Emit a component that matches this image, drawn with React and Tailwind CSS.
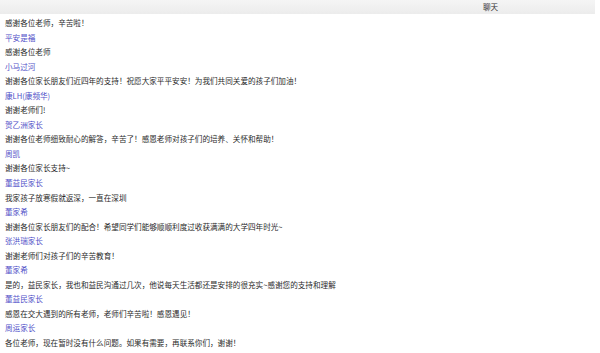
const messages = [
  { text: "感谢各位老师，辛苦啦！" },
  { name: "平安是福", text: "感谢各位老师" },
  { name: "小马过河", text: "谢谢各位家长朋友们近四年的支持！祝愿大家平平安安！为我们共同关爱的孩子们加油！" },
  { name: "康LH(康频华)", text: "谢谢老师们!" },
  { name: "贺乙洲家长", text: "谢谢各位老师细致耐心的解答，辛苦了！感恩老师对孩子们的培养、关怀和帮助！" },
  { name: "周凯", text: "谢谢各位家长支持~" },
  { name: "董益民家长", text: "我家孩子放寒假就返深，一直在深圳" },
  { name: "董家希", text: "谢谢各位家长朋友们的配合！希望同学们能够顺顺利度过收获满满的大学四年时光~" },
  { name: "张洪瑞家长", text: "谢谢老师们对孩子们的辛苦教育！" },
  { name: "董家希", text: "是的，益民家长，我也和益民沟通过几次，他说每天生活都还是安排的很充实~感谢您的支持和理解" },
  { name: "董益民家长", text: "感恩在交大遇到的所有老师，老师们辛苦啦！感恩遇见！" },
  { name: "周运家长", text: "各位老师，现在暂时没有什么问题。如果有需要，再联系你们，谢谢！" },
];

export default function App() {
  return (
    <div
      className="w-[600px] h-[353px] overflow-hidden bg-white"
      style={{ fontFamily: '"Noto Sans CJK SC", "Liberation Sans", sans-serif' }}
    >
      {/* Header */}
      <div className="w-[595px] h-[14px] bg-gradient-to-b from-[#f5f5f5] to-[#ececec] flex items-center pl-[483px]">
        <span className="text-[7.6px] leading-none text-[#333]">聊天</span>
      </div>

      {/* Chat list */}
      <div className="pt-[2px] px-[5px] flex flex-col text-[7.6px] leading-[14.55px]">
        {messages.map((m, i) => (
          <div key={i} className="flex flex-col">
            {m.name && <div className="text-[#5050c8] whitespace-nowrap">{m.name}</div>}
            <div className="text-[#2a2a2a] whitespace-nowrap">{m.text}</div>
          </div>
        ))}
      </div>
    </div>
  );
}
